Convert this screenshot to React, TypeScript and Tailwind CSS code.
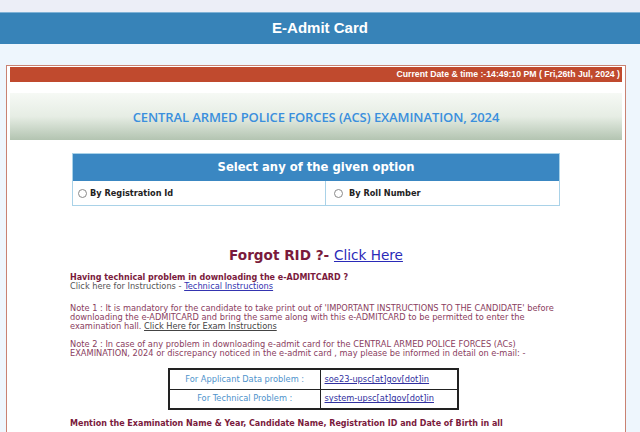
const verdana = { fontFamily: '"DejaVu Sans", Verdana, sans-serif' };

export default function App() {
  return (
    <div className="w-[640px] h-[432px] overflow-hidden bg-[#eef6fd] font-['DejaVu_Sans',Verdana,sans-serif]">
      {/* top strip */}
      <div className="h-[12px] bg-[#eceef7]" />

      {/* header */}
      <div className="h-[32px] bg-[#3783b8] border-t border-[#7fb2d6] flex items-center justify-center">
        <span className="text-white font-bold text-[15px] font-['Liberation_Sans',Arial,sans-serif]">E-Admit Card</span>
      </div>

      {/* main box */}
      <div className="mt-[21px] ml-[6px] w-[620px] h-[400px] border border-[#c98272] bg-white px-[3px] pt-[1px]">
        <div className="h-[15px] bg-[#c04a2e] flex items-center justify-end pr-[2px]">
          <span className="text-white font-bold text-[8.7px] font-['Liberation_Sans',Arial,sans-serif]">
            Current Date &amp; time :-14:49:10 PM ( Fri,26th Jul, 2024 )
          </span>
        </div>

        <div className="mt-[11px] h-[47px] bg-gradient-to-b from-[#f6f9f5] via-[#e6ede4] to-[#b3c4b1] flex items-center justify-center pt-[3px]">
          <span className="text-[#3a8fdd] font-semibold text-[13px] tracking-[-0.1px] font-['Open_Sans',sans-serif]">
            CENTRAL ARMED POLICE FORCES (ACS) EXAMINATION, 2024
          </span>
        </div>

        {/* option table */}
        <div className="mt-[13px] mx-auto w-[488px] border border-[#a9d2e8]">
          <div className="h-[27px] bg-[#3a87c2] flex items-center justify-center">
            <span className="text-white font-bold text-[11.6px]">Select any of the given option</span>
          </div>
          <div className="h-[24px] flex">
            <label className="w-[253px] border-r border-[#a9d2e8] flex items-center gap-[3px] pl-[5px]">
              <span className="w-[9px] h-[9px] rounded-full border border-[#8a8a8a] bg-white" />
              <span className="font-bold text-[8.2px] text-[#222]">By Registration Id</span>
            </label>
            <label className="flex-1 flex items-center gap-[6px] pl-[8px]">
              <span className="w-[9px] h-[9px] rounded-full border border-[#8a8a8a] bg-white" />
              <span className="font-bold text-[8.2px] text-[#222]">By Roll Number</span>
            </label>
          </div>
        </div>

        {/* forgot rid */}
        <div className="mt-[40px] text-center text-[13.6px] leading-[18px]">
          <span className="font-bold text-[#7a1a3c]">Forgot RID ?- </span>
          <a className="text-[#2a2ab8] underline">Click Here</a>
        </div>

        <div className="mt-[9px] pl-[60px] text-[8.25px] leading-[9px] whitespace-nowrap" style={verdana}>
          <p className="font-bold text-[8px] text-[#7a1a3c]">Having technical problem in downloading the e-ADMITCARD ?</p>
          <p className="text-[#555]">
            Click here for Instructions - <a className="text-[#3434b0] underline">Technical Instructions</a>
          </p>

          <p className="mt-[13px] text-[#8a3d5e]">
            Note 1 : It is mandatory for the candidate to take print out of 'IMPORTANT INSTRUCTIONS TO THE CANDIDATE' before
            <br />
            downloading the e-ADMITCARD and bring the same along with this e-ADMITCARD to be permitted to enter the
            <br />
            examination hall. <a className="text-[#444] underline">Click Here for Exam Instructions</a>
          </p>

          <p className="mt-[9px] text-[#8a3d5e]">
            Note 2 : In case of any problem in downloading e-admit card for the CENTRAL ARMED POLICE FORCES (ACs)
            <br />
            EXAMINATION, 2024 or discrepancy noticed in the e-admit card , may please be informed in detail on e-mail: -
          </p>

          <table className="mt-[10px] ml-[98px] w-[291px] border-collapse border-2 border-[#222] text-[8.25px]">
            <tbody>
              <tr className="h-[20px]">
                <td className="w-[151px] border border-[#222] text-center text-[#4f93cc]">For Applicant Data problem :</td>
                <td className="border border-[#222] pl-[4px]">
                  <a className="text-[#3030a0] underline">soe23-upsc[at]gov[dot]in</a>
                </td>
              </tr>
              <tr className="h-[20px]">
                <td className="border border-[#222] text-center text-[#4f93cc]">For Technical Problem :</td>
                <td className="border border-[#222] pl-[4px]">
                  <a className="text-[#3030a0] underline">system-upsc[at]gov[dot]in</a>
                </td>
              </tr>
            </tbody>
          </table>

          <p className="mt-[9px] font-bold text-[8px] text-[#7a1a3c]">
            Mention the Examination Name &amp; Year, Candidate Name, Registration ID and Date of Birth in all
          </p>
        </div>
      </div>
    </div>
  );
}
